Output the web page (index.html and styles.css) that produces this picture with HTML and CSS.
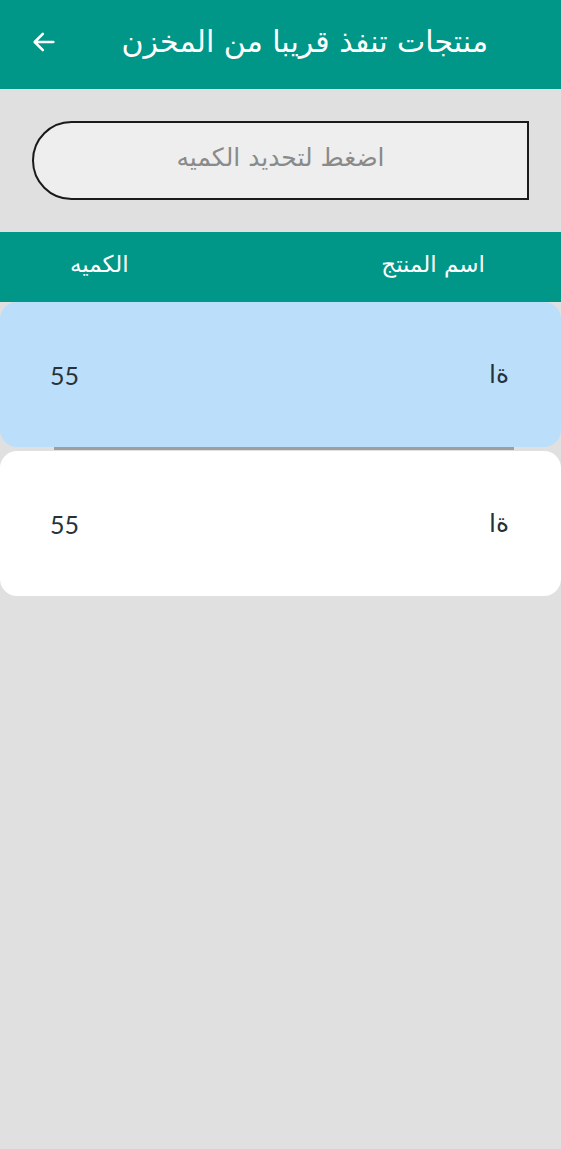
FILE: index.html
```html
<!DOCTYPE html>
<html lang="ar" dir="rtl">
<head>
<meta charset="utf-8">
<title>منتجات تنفذ قريبا من المخزن</title>
<link rel="stylesheet" href="styles.css">
</head>
<body>
<header class="appbar">
  <h1 class="appbar-title">منتجات تنفذ قريبا من المخزن</h1>
  <button class="back" aria-label="رجوع">
    <svg width="28" height="28" viewBox="0 0 24 24"><path d="M20 12H5M11 5l-7 7 7 7" fill="none" stroke="#fff" stroke-width="2.2" stroke-linecap="round" stroke-linejoin="round"/></svg>
  </button>
</header>
<section class="search-area">
  <div class="qty-input">اضغط لتحديد الكميه</div>
</section>
<div class="table-head">
  <span class="col-name">اسم المنتج</span>
  <span class="col-qty">الكميه</span>
</div>
<div class="list">
  <div class="row row-active">
    <span class="cell-name">ةا</span>
    <span class="cell-qty">55</span>
  </div>
  <div class="divider"></div>
  <div class="row">
    <span class="cell-name">ةا</span>
    <span class="cell-qty">55</span>
  </div>
</div>
</body>
</html>
```
FILE: styles.css
```css
html, body {
  margin: 0;
  padding: 0;
}
body {
  background: #e0e0e0;
  width: 561px;
  height: 1149px;
  font-family: "DejaVu Sans", "Noto Sans", sans-serif;
}
.appbar {
  background: #009688;
  height: 89px;
  display: flex;
  align-items: center;
  justify-content: space-between;
  padding: 0 73px 6px 24px;
  box-sizing: border-box;
}
.appbar-title {
  margin: 0;
  color: #fff;
  font-size: 30px;
  font-weight: 400;
  line-height: 1;
}
.back {
  background: none;
  border: 0;
  padding: 0;
  width: 40px;
  height: 40px;
  display: flex;
  align-items: center;
  justify-content: center;
}
.search-area {
  padding: 32px;
}
.qty-input {
  height: 79px;
  box-sizing: border-box;
  border: 2px solid #1a1a1a;
  border-radius: 40px 0 0 40px;
  background: #eeeeee;
  display: flex;
  align-items: center;
  justify-content: center;
  color: #8a8a8a;
  font-size: 25px;
  padding-bottom: 6px;
}
.table-head {
  background: #009688;
  height: 70px;
  display: flex;
  justify-content: space-between;
  align-items: center;
  color: #fff;
  font-size: 23px;
  padding: 0 76px 0 70px;
}
.table-head span { margin-top: -6px; }
.row {
  height: 145px;
  background: #fff;
  border-radius: 17px;
  display: flex;
  justify-content: space-between;
  align-items: center;
  padding: 0 52px 0 50px;
  color: #263238;
  font-size: 25px;
}
.row-active {
  background: #bbdefb;
  height: 145px;
}
.cell-name {
  margin-top: 0;
}
.cell-qty {
  font-family: Lato, "Noto Sans", sans-serif;
  font-size: 25px;
}
.divider {
  height: 3px;
  background: #9e9e9e;
  margin: 0 47px 1px 54px;
}
```
